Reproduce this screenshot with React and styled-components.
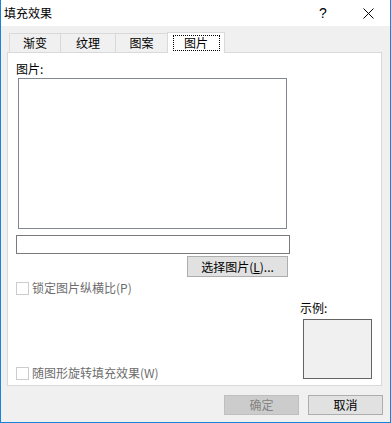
import React, { useState } from 'react';
import styled, { createGlobalStyle } from 'styled-components';

const GlobalStyle = createGlobalStyle`
  body {
    margin: 0;
    background: #ffffff;
    font-family: "Noto Sans CJK SC", "Microsoft YaHei", sans-serif;
    font-size: 12px;
  }
`;

const Window = styled.div`
  width: 391px;
  height: 423px;
  box-sizing: border-box;
  border: 1px solid #1883d7;
  border-top: none;
  background: #f0f0f0;
  display: flex;
  flex-direction: column;
`;

const TitleBar = styled.div`
  height: 26px;
  background: #ffffff;
  display: flex;
  align-items: center;
  padding-left: 3px;
  color: #000;
  font-size: 12px;
  line-height: 16px;
`;

const TitleText = styled.div`
  flex: 1;
`;

const TitleButton = styled.div`
  width: ${(p) => p.w}px;
  height: 26px;
  display: flex;
  align-items: center;
  justify-content: center;
  font-family: "Liberation Sans", Arial, sans-serif;
  font-size: 14px;
`;

const Body = styled.div`
  padding: 6px 7px 0 6px;
  display: flex;
  flex-direction: column;
`;

const TabStrip = styled.div`
  display: flex;
  align-items: flex-end;
  height: 21px;
  margin-left: 2px;
  margin-bottom: -1px;
  position: relative;
  z-index: 1;
`;

const Tab = styled.div`
  box-sizing: border-box;
  width: ${(p) => p.w}px;
  height: ${(p) => (p.active ? 21 : 20)}px;
  margin-left: ${(p) => (p.first ? 0 : -1)}px;
  border: 1px solid #d9d9d9;
  border-bottom: ${(p) => (p.active ? 'none' : '1px solid #d9d9d9')};
  background: ${(p) => (p.active ? '#ffffff' : '#f0f0f0')};
  display: flex;
  justify-content: center;
  align-items: flex-start;
  padding-top: ${(p) => (p.active ? 2 : 1)}px;
  line-height: 16px;
  color: #000;
`;

const FocusBox = styled.span`
  border: 1px dotted #000;
  width: 45px;
  height: 14px;
  display: flex;
  align-items: center;
  justify-content: center;
  line-height: 14px;
`;

const Panel = styled.div`
  box-sizing: border-box;
  width: 375px;
  height: 334px;
  border: 1px solid #d9d9d9;
  background: #ffffff;
  display: flex;
  flex-direction: column;
  padding: 8px 9px 6px 8px;
`;

const Label = styled.div`
  line-height: 16px;
  color: #000;
`;

const PictureBox = styled.div`
  box-sizing: border-box;
  width: 269px;
  height: 151px;
  margin: 1px 0 0 2px;
  border: 1px solid #828790;
  background: #ffffff;
`;

const TextInput = styled.div`
  box-sizing: border-box;
  width: 274px;
  height: 19px;
  margin-top: 6px;
  border: 1px solid #7a7a7a;
  background: #ffffff;
`;

const PushButton = styled.button`
  box-sizing: border-box;
  width: ${(p) => p.w}px;
  height: ${(p) => p.h}px;
  margin: 0;
  padding: 0;
  border: 1px solid ${(p) => (p.disabled ? '#bfbfbf' : '#adadad')};
  background: ${(p) => (p.disabled ? '#cccccc' : '#e1e1e1')};
  color: ${(p) => (p.disabled ? '#838383' : '#000')};
  font-family: "Noto Sans CJK SC", "Microsoft YaHei", sans-serif;
  font-size: 12px;
  line-height: 16px;
  display: flex;
  align-items: center;
  justify-content: center;
  letter-spacing: ${(p) => p.spacing || 0}px;
`;

const BrowseButton = styled(PushButton)`
  margin: 2px 0 0 171px;
`;

const CheckRow = styled.label`
  display: flex;
  align-items: center;
  gap: 3px;
  height: 14px;
  margin-top: ${(p) => p.top || 0}px;
  margin-bottom: ${(p) => p.bottom || 0}px;
  color: #6d6d6d;
  line-height: 14px;
`;

const CheckBox = styled.span`
  box-sizing: border-box;
  width: 13px;
  height: 13px;
  border: 1px solid #cccccc;
  background: #ffffff;
`;

const BottomRow = styled.div`
  margin-top: auto;
  display: flex;
  justify-content: space-between;
  align-items: flex-end;
`;

const Preview = styled.div`
  display: flex;
  flex-direction: column;
  align-items: flex-start;
`;

const Sample = styled.div`
  box-sizing: border-box;
  width: 69px;
  height: 60px;
  margin: 3px 0 0 3px;
  border: 1px solid #646464;
  background: #f0f0f0;
`;

const Footer = styled.div`
  display: flex;
  justify-content: flex-end;
  gap: 9px;
  margin-top: 9px;
  padding-right: 0;
`;

const tabs = [
  { name: '渐变', w: 52 },
  { name: '纹理', w: 56 },
  { name: '图案', w: 53 },
  { name: '图片', w: 58 },
];

export default function App() {
  const [active] = useState(3);

  return (
    <>
      <GlobalStyle />
      <Window>
        <TitleBar>
          <TitleText>填充效果</TitleText>
          <TitleButton w={46}>?</TitleButton>
          <TitleButton w={44}>
            <svg width="11" height="11" viewBox="0 0 11 11">
              <path d="M0.5 0.5 L10.5 10.5 M10.5 0.5 L0.5 10.5" stroke="#000" strokeWidth="1" fill="none" />
            </svg>
          </TitleButton>
        </TitleBar>
        <Body>
          <TabStrip>
            {tabs.map((t, i) => (
              <Tab key={t.name} w={t.w} first={i === 0} active={i === active}>
                {i === active ? <FocusBox>{t.name}</FocusBox> : t.name}
              </Tab>
            ))}
          </TabStrip>
          <Panel>
            <Label>图片:</Label>
            <PictureBox />
            <TextInput />
            <BrowseButton w={101} h={21}>选择图片(<u>L</u>)...</BrowseButton>
            <CheckRow top={4}>
              <CheckBox />
              锁定图片纵横比(P)
            </CheckRow>
            <BottomRow>
              <CheckRow bottom={-1}>
                <CheckBox />
                随图形旋转填充效果(W)
              </CheckRow>
              <Preview>
                <Label>示例:</Label>
                <Sample />
              </Preview>
            </BottomRow>
          </Panel>
          <Footer>
            <PushButton w={75} h={20} disabled>确定</PushButton>
            <PushButton w={75} h={20}>取消</PushButton>
          </Footer>
        </Body>
      </Window>
    </>
  );
}
